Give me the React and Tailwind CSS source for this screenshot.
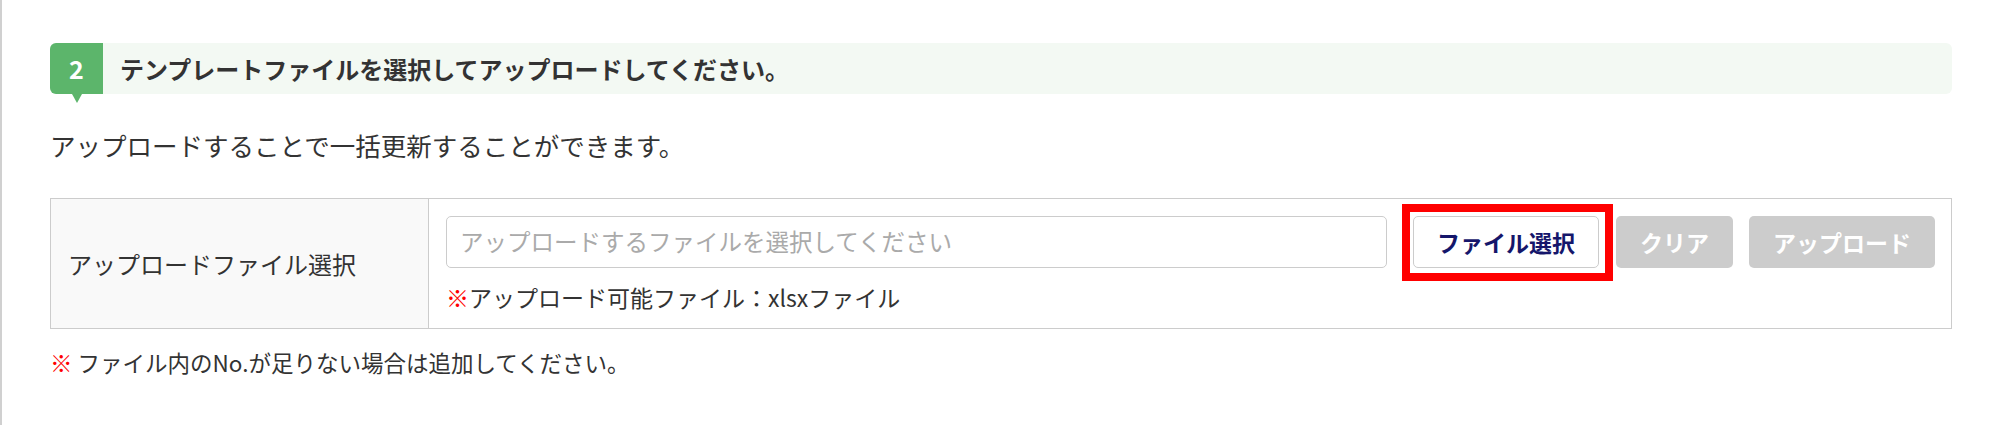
import React from 'react';

const font = "font-['Noto_Sans_CJK_JP','Noto_Sans',sans-serif]";

const UploadStep = () => {
  return (
    <div className={`w-[2000px] h-[425px] bg-white border-l-2 border-[#d0d0d0] pl-[48px] pr-[48px] pt-[43px] ${font}`}>
      {/* step heading */}
      <div className="flex h-[51px] rounded-[6px] bg-[#f3f9f3]">
        <div className="relative flex w-[53px] items-center justify-center rounded-l-[6px] bg-[#5cb56b]">
          <span className="text-[25px] font-bold leading-none text-white">2</span>
          <span className="absolute left-1/2 top-full -ml-[5px] h-0 w-0 border-x-[5px] border-t-[9px] border-x-transparent border-t-[#5cb56b]" />
        </div>
        <div className="ml-[17px] flex items-center text-[24px] font-bold text-[#333]">
          テンプレートファイルを選択してアップロードしてください。
        </div>
      </div>

      <p className="mt-[33px] text-[25.5px] leading-[36px] text-[#333]">
        アップロードすることで一括更新することができます。
      </p>

      {/* upload table */}
      <div className="mt-[35px] flex h-[131px] border border-[#ccc]">
        <div className="flex w-[378px] items-center border-r border-[#ccc] bg-[#f9f9f9] pl-[17px] text-[24px] text-[#333]">
          アップロードファイル選択
        </div>
        <div className="flex-1 pl-[17px] pr-[16px] pt-[17px]">
          <div className="flex items-center">
            <div className="flex h-[52px] flex-1 items-center rounded-[5px] border border-[#ccc] px-[13px] text-[23.5px] text-[#aaa]">
              アップロードするファイルを選択してください
            </div>
            <div className="relative ml-[26px]">
              <button className="h-[52px] w-[186px] rounded-[5px] border border-[#ccc] bg-white text-[23px] font-bold text-[#15166b]">
                ファイル選択
              </button>
              <span className="pointer-events-none absolute -left-[11px] -right-[14px] -top-[12px] -bottom-[13px] border-[8px] border-[#ff0000]" />
            </div>
            <button className="ml-[17px] h-[52px] w-[117px] rounded-[5px] bg-[#ccc] text-[23px] font-bold text-white">
              クリア
            </button>
            <button className="ml-[16px] h-[52px] w-[186px] rounded-[5px] bg-[#ccc] text-[23px] font-bold text-white">
              アップロード
            </button>
          </div>
          <p className="mt-[11px] text-[23px] leading-[36px] text-[#333]">
            <span className="font-bold text-[#ff0000]">※</span>アップロード可能ファイル：xlsxファイル
          </p>
        </div>
      </div>

      <p className="mt-[15px] text-[22.5px] leading-[36px] text-[#333]">
        <span className="font-bold text-[#ff0000]">※</span> ファイル内のNo.が足りない場合は追加してください。
      </p>
    </div>
  );
};

export default function App() {
  return <UploadStep />;
}
